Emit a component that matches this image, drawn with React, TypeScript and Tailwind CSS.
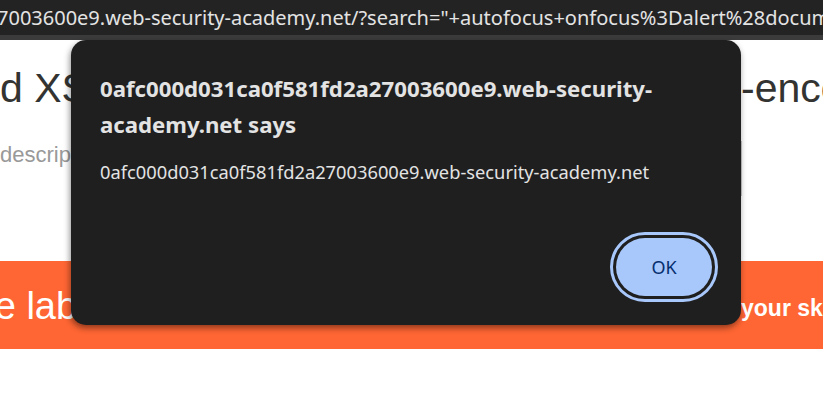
import React from 'react';

const ui = { fontFamily: '"Noto Sans", "Open Sans", sans-serif' };
const arial = { fontFamily: '"Liberation Sans", Arial, sans-serif' };

function AddressBar() {
  return (
    <div>
      <div className="h-[35px] bg-[#232323] overflow-hidden whitespace-nowrap flex items-center" style={ui}>
        <span className="shrink-0 -ml-[3px] text-[20px] text-[#e3e3e3]">
          7003600e9.web-security-academy.net/?search=&quot;+autofocus+onfocus%3Dalert%28document.domain%29+&quot;
        </span>
      </div>
      <div className="h-[5px] bg-[#3b3b3b]" />
    </div>
  );
}

function LabPage() {
  return (
    <div style={arial}>
      <div className="mt-[23px] flex whitespace-nowrap text-[41px] leading-[50px] text-[#333332]">
        <span className="w-[741px] shrink-0 overflow-hidden">d XSS into attribute with angle brackets HTML</span>
        <span className="shrink-0">-encoded</span>
      </div>
      <div className="mt-[28px] flex whitespace-nowrap text-[22px] leading-[28px] text-[#999999]">
        <span className="w-[741px] shrink-0 overflow-hidden">description</span>
        <span className="w-px h-[55px] shrink-0 bg-[#cbcbcb]" />
      </div>
      <div className="mt-[65px] h-[88px] bg-[#ff6633] flex items-center whitespace-nowrap text-white overflow-hidden">
        <div className="w-[741px] shrink-0 overflow-hidden">
          <span className="block -ml-[37px] text-[38px] pt-[2px]">the lab!</span>
        </div>
        <span className="shrink-0 text-[23px] font-bold pt-[6px]">your skills!</span>
      </div>
    </div>
  );
}

function AlertDialog() {
  return (
    <div
      className="absolute left-[71px] top-[40px] w-[670px] h-[285px] rounded-[15px] bg-[#1f1f1f] shadow-[-1px_3px_6px_rgba(0,0,0,0.45)] flex flex-col"
      style={ui}
    >
      <div className="pl-[29px] pr-[10px] pt-[31px] text-[22.2px] font-bold leading-[36px] text-[#e3e3e3] whitespace-nowrap">
        0afc000d031ca0f581fd2a27003600e9.web-security-
        <br />
        academy.net says
      </div>
      <div className="pl-[29px] mt-[16px] text-[18.3px] leading-[26px] text-[#e3e3e3] whitespace-nowrap">
        0afc000d031ca0f581fd2a27003600e9.web-security-academy.net
      </div>
      <div className="flex-1" />
      <div className="flex justify-end pr-[23px] pb-[23px]">
        <div className="rounded-full border-[3px] border-[#a8c7fa] p-[3px]">
          <button className="w-[96px] h-[58px] rounded-full bg-[#a8c7fa] text-[#062e6f] text-[18px] flex items-center justify-center">
            OK
          </button>
        </div>
      </div>
    </div>
  );
}

export default function App() {
  return (
    <div className="relative w-[823px] h-[406px] overflow-hidden bg-white">
      <AddressBar />
      <LabPage />
      <AlertDialog />
    </div>
  );
}
